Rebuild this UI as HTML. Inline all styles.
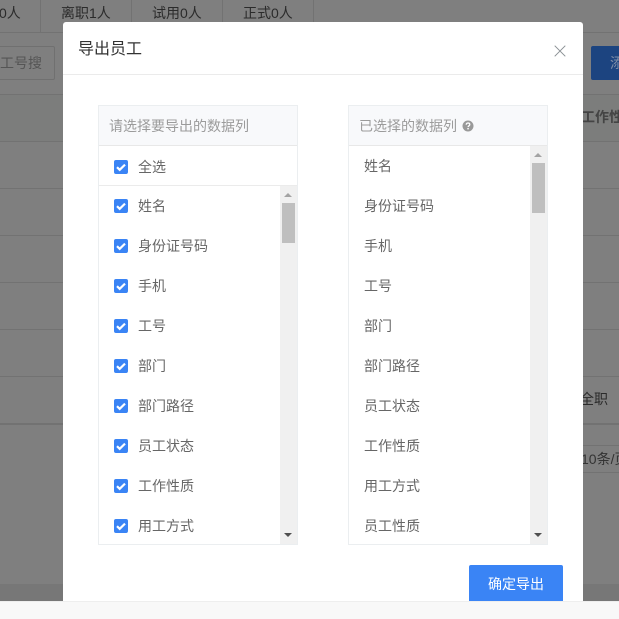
<!DOCTYPE html>
<html lang="zh">
<head>
<meta charset="utf-8">
<style>
html,body{margin:0;padding:0;background:#fff}
body{width:619px;height:619px;position:relative;overflow:hidden;font-family:"Liberation Sans","Noto Sans CJK SC",sans-serif}
.a{position:absolute}
.hl{position:absolute;left:0;width:619px;height:1px;background:#727272}
.vl{position:absolute;top:0;width:1px;height:32px;background:#727272}
.bgt{position:absolute;font-size:14px;line-height:20px;color:#2b2b2b;white-space:nowrap}
.panel{position:absolute;top:105px;width:198px;height:438px;border:1px solid #ebeef0;background:#fff}
.ph{position:absolute;left:0;top:0;width:198px;height:39px;background:#f8f9fb;border-bottom:1px solid #e8e8e8;font-size:14px;line-height:41px;color:#9b9b9b}
.it{position:absolute;font-size:14px;line-height:20px;color:#666;white-space:nowrap}
.cb{position:absolute;left:15px;width:14px;height:14px;border-radius:2px;background:#3a84f5}
.cb svg{display:block}
.sb{position:absolute;top:40px;width:17px;height:398px;background:#f0f0f0}
.thumb{position:absolute;left:2px;width:13px;height:50px;background:#bfbfbf}
.up{position:absolute;left:4px;top:7px;width:0;height:0;border-left:4px solid transparent;border-right:4px solid transparent;border-bottom:4px solid #a3a3a3}
.dn{position:absolute;left:4px;bottom:7px;width:0;height:0;border-left:4px solid transparent;border-right:4px solid transparent;border-top:4px solid #505050}
</style>
</head>
<body>
<div class="a" style="left:0;top:0;width:619px;height:601px;background:#7f7f7f"></div>
<div class="a" style="left:0;top:95px;width:619px;height:46px;background:#7c7d7c"></div>
<div class="a" style="left:0;top:584px;width:619px;height:17px;background:#777"></div>

<div class="hl" style="top:32px"></div>
<div class="hl" style="top:94px"></div>
<div class="hl" style="top:141px"></div>
<div class="hl" style="top:188px"></div>
<div class="hl" style="top:235px"></div>
<div class="hl" style="top:282px"></div>
<div class="hl" style="top:329px"></div>
<div class="hl" style="top:376px"></div>
<div class="hl" style="top:423px;height:2px"></div>
<div class="hl" style="top:445px;left:400px;width:219px"></div>
<div class="hl" style="top:472px;left:400px;width:219px"></div>
<div class="vl" style="left:40px"></div>
<div class="vl" style="left:131px"></div>
<div class="vl" style="left:222px"></div>
<div class="vl" style="left:313px"></div>

<div class="bgt" style="left:-1px;top:3px">0人</div>
<div class="bgt" style="left:61px;top:3px">离职1人</div>
<div class="bgt" style="left:152px;top:3px">试用0人</div>
<div class="bgt" style="left:243px;top:3px">正式0人</div>
<div class="a" style="left:-20px;top:46px;width:73px;height:32px;border:1px solid #707070;border-radius:2px"></div>
<div class="bgt" style="left:0;top:53px;color:#555">工号搜</div>
<div class="a" style="left:591px;top:46px;width:40px;height:34px;background:#1c4480;border-radius:2px"></div>
<div class="bgt" style="left:610px;top:53px;color:#7f8fa8">添</div>
<div class="bgt" style="left:581px;top:107px;font-weight:bold;color:#444">工作性</div>
<div class="bgt" style="left:580px;top:389px">全职</div>
<div class="bgt" style="left:581px;top:449px;color:#333">10条/页</div>

<div class="a" style="left:63px;top:22px;width:520px;height:579px;background:#fff;border-radius:3px 3px 0 0;overflow:hidden">
  <div class="a" style="left:15px;top:18px;font-size:16px;line-height:20px;color:#333">导出员工</div>
  <svg class="a" style="left:491px;top:23px" width="12" height="12" viewBox="0 0 12 12"><path d="M.7.7l10.6 10.6M11.3.7L.7 11.3" stroke="#8a9094" stroke-width="1" fill="none"/></svg>
  <div class="a" style="left:0;top:52px;width:520px;height:1px;background:#ebebeb"></div>

  <div class="panel" style="left:35px;top:83px">
    <div class="ph"><span style="margin-left:10px">请选择要导出的数据列</span></div>
    <div class="a" style="left:0;top:79px;width:198px;height:1px;background:#ebebeb"></div>
    <div class="cb" style="top:54px"><svg width="14" height="14" viewBox="0 0 14 14"><path d="M3 7.2l2.7 2.6L11 4.6" stroke="#fff" stroke-width="2.2" fill="none"/></svg></div>
    <div class="it" style="left:39px;top:51px">全选</div>
    <div class="cb" style="top:93px"><svg width="14" height="14" viewBox="0 0 14 14"><path d="M3 7.2l2.7 2.6L11 4.6" stroke="#fff" stroke-width="2.2" fill="none"/></svg></div>
    <div class="it" style="left:39px;top:90px">姓名</div>
    <div class="cb" style="top:133px"><svg width="14" height="14" viewBox="0 0 14 14"><path d="M3 7.2l2.7 2.6L11 4.6" stroke="#fff" stroke-width="2.2" fill="none"/></svg></div>
    <div class="it" style="left:39px;top:130px">身份证号码</div>
    <div class="cb" style="top:173px"><svg width="14" height="14" viewBox="0 0 14 14"><path d="M3 7.2l2.7 2.6L11 4.6" stroke="#fff" stroke-width="2.2" fill="none"/></svg></div>
    <div class="it" style="left:39px;top:170px">手机</div>
    <div class="cb" style="top:213px"><svg width="14" height="14" viewBox="0 0 14 14"><path d="M3 7.2l2.7 2.6L11 4.6" stroke="#fff" stroke-width="2.2" fill="none"/></svg></div>
    <div class="it" style="left:39px;top:210px">工号</div>
    <div class="cb" style="top:253px"><svg width="14" height="14" viewBox="0 0 14 14"><path d="M3 7.2l2.7 2.6L11 4.6" stroke="#fff" stroke-width="2.2" fill="none"/></svg></div>
    <div class="it" style="left:39px;top:250px">部门</div>
    <div class="cb" style="top:293px"><svg width="14" height="14" viewBox="0 0 14 14"><path d="M3 7.2l2.7 2.6L11 4.6" stroke="#fff" stroke-width="2.2" fill="none"/></svg></div>
    <div class="it" style="left:39px;top:290px">部门路径</div>
    <div class="cb" style="top:333px"><svg width="14" height="14" viewBox="0 0 14 14"><path d="M3 7.2l2.7 2.6L11 4.6" stroke="#fff" stroke-width="2.2" fill="none"/></svg></div>
    <div class="it" style="left:39px;top:330px">员工状态</div>
    <div class="cb" style="top:373px"><svg width="14" height="14" viewBox="0 0 14 14"><path d="M3 7.2l2.7 2.6L11 4.6" stroke="#fff" stroke-width="2.2" fill="none"/></svg></div>
    <div class="it" style="left:39px;top:370px">工作性质</div>
    <div class="cb" style="top:413px"><svg width="14" height="14" viewBox="0 0 14 14"><path d="M3 7.2l2.7 2.6L11 4.6" stroke="#fff" stroke-width="2.2" fill="none"/></svg></div>
    <div class="it" style="left:39px;top:410px">用工方式</div>
    <div class="sb" style="left:181px;top:80px;height:358px"><div class="up"></div><div class="thumb" style="top:17px;height:40px"></div><div class="dn"></div></div>
  </div>

  <div class="panel" style="left:285px;top:83px">
    <div class="ph"><span style="margin-left:10px">已选择的数据列</span>
      <svg class="a" style="left:113px;top:14px" width="12" height="12" viewBox="0 0 12 12"><circle cx="6" cy="6" r="5.5" fill="#999"/><path d="M4.2 4.7C4.3 3.6 5 3 6 3s1.8.6 1.8 1.5c0 1.3-1.7 1.3-1.7 2.6" stroke="#fff" stroke-width="1.3" fill="none"/><rect x="5.3" y="8" width="1.5" height="1.4" fill="#fff"/></svg>
    </div>
    <div class="it" style="left:15px;top:50px">姓名</div>
    <div class="it" style="left:15px;top:90px">身份证号码</div>
    <div class="it" style="left:15px;top:130px">手机</div>
    <div class="it" style="left:15px;top:170px">工号</div>
    <div class="it" style="left:15px;top:210px">部门</div>
    <div class="it" style="left:15px;top:250px">部门路径</div>
    <div class="it" style="left:15px;top:290px">员工状态</div>
    <div class="it" style="left:15px;top:330px">工作性质</div>
    <div class="it" style="left:15px;top:370px">用工方式</div>
    <div class="it" style="left:15px;top:410px">员工性质</div>
    <div class="sb" style="left:181px"><div class="up"></div><div class="thumb" style="top:17px"></div><div class="dn"></div></div>
  </div>

  <div class="a" style="left:406px;top:543px;width:94px;height:36px;background:#3a84f5;border-radius:2px 2px 0 0;color:#fff;font-size:14px;line-height:38px;text-align:center">确定导出</div>
</div>

<div class="a" style="left:0;top:601px;width:619px;height:18px;background:#f8f8f8;border-top:1px solid #eee;box-sizing:border-box"></div>
</body>
</html>
